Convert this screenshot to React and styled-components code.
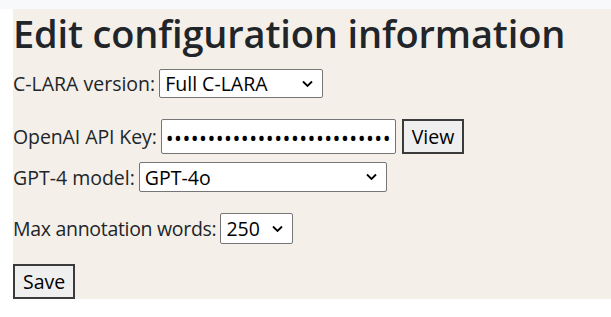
import React from "react";
import styled, { createGlobalStyle } from "styled-components";

const GlobalStyle = createGlobalStyle`
  html, body {
    margin: 0;
    padding: 0;
    background: #ffffff;
  }
  body {
    font-family: "Open Sans", "Noto Sans", sans-serif;
    color: #212529;
  }
`;

const TopBar = styled.div`
  height: 9px;
  background: #f8f9fa;
`;

const Panel = styled.div`
  margin-left: 13px;
  background: #f4f0e9;
  display: flex;
  flex-direction: column;
  align-items: flex-start;
`;

const Title = styled.h1`
  margin: 0;
  font-size: 38px;
  font-weight: 600;
  line-height: 48px;
  letter-spacing: -0.15px;
  color: #212529;
`;

const Row = styled.div`
  display: flex;
  align-items: center;
  gap: 4px;
  margin-top: ${(p) => p.$top || 0}px;
  font-size: 19.5px;
`;

const Label = styled.label`
  color: #212529;
  letter-spacing: ${(p) => p.$tight || 0}px;
`;

const SelectWrap = styled.div`
  position: relative;
  width: ${(p) => p.$width}px;
  height: ${(p) => p.$height || 30}px;
`;

const Select = styled.select`
  appearance: none;
  width: 100%;
  height: 100%;
  box-sizing: border-box;
  border: 1px solid #767676;
  border-radius: 2px;
  background: #ffffff;
  padding: 0 0 0 5px;
  font-family: inherit;
  font-size: 19.5px;
  color: #000;
  outline: none;
`;

const Chevron = styled.svg`
  position: absolute;
  right: 10px;
  top: 50%;
  transform: translateY(-50%);
  pointer-events: none;
`;

const KeyInput = styled.input`
  width: 235px;
  height: 35px;
  box-sizing: border-box;
  border: 1px solid #767676;
  border-radius: 2px;
  background: #ffffff;
  padding: 2px 3px 0 4px;
  font-family: inherit;
  font-size: 21px;
  letter-spacing: 0.45px;
  color: #000;
  outline: none;
`;

const Button = styled.button`
  height: 35px;
  box-sizing: border-box;
  margin-left: ${(p) => p.$offset || 0}px;
  padding: 0 8px;
  border: 2px solid #3b3b3b;
  border-radius: 0;
  background: #efefef;
  font-family: inherit;
  font-size: 19.5px;
  color: #000;
`;

const Dropdown = ({ width, height, value, options }) => (
  <SelectWrap $width={width} $height={height}>
    <Select defaultValue={value}>
      {options.map((o) => (
        <option key={o}>{o}</option>
      ))}
    </Select>
    <Chevron width="11" height="7" viewBox="0 0 11 7">
      <path d="M1 1l4.5 4.5L10 1" fill="none" stroke="#000" strokeWidth="1.8" />
    </Chevron>
  </SelectWrap>
);

const App = () => {
  return (
    <>
      <GlobalStyle />
      <TopBar />
      <Panel>
        <Title>Edit configuration information</Title>
        <Row $top={12}>
          <Label>C-LARA version:</Label>
          <Dropdown width={164} height={29} value="Full C-LARA" options={["Full C-LARA", "Simple C-LARA"]} />
        </Row>
        <Row $top={21}>
          <Label $tight={-0.1}>OpenAI API Key:</Label>
          <KeyInput type="password" defaultValue="sk-abcdefghijklmnopqrstuvwxy" />
          <Button $offset={2}>View</Button>
        </Row>
        <Row $top={8}>
          <Label>GPT-4 model:</Label>
          <Dropdown width={248} height={30} value="GPT-4o" options={["GPT-4o", "GPT-4-turbo"]} />
        </Row>
        <Row $top={21}>
          <Label $tight={-0.3}>Max annotation words:</Label>
          <Dropdown width={73} height={31} value="250" options={["100", "250", "500"]} />
        </Row>
        <Row $top={20}>
          <Button>Save</Button>
        </Row>
      </Panel>
    </>
  );
};

export default App;
